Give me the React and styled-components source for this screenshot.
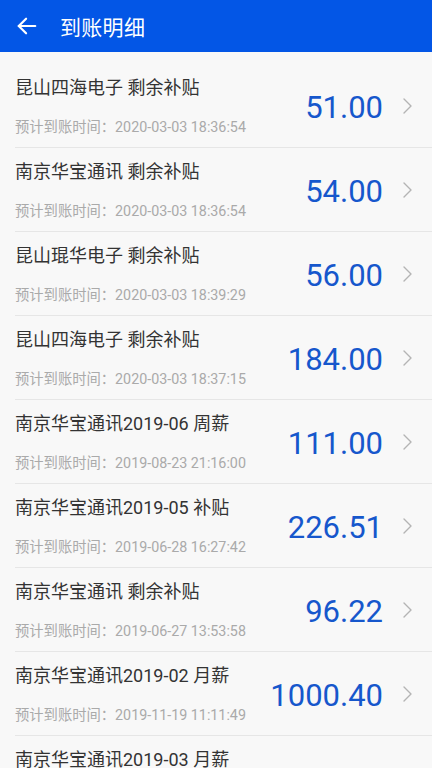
import React from "react";
import styled, { createGlobalStyle } from "styled-components";

const Global = createGlobalStyle`
  html, body { margin: 0; padding: 0; background: #f8f8f8; }
  body { font-family: Roboto, "Noto Sans CJK SC", sans-serif; }
  * { box-sizing: border-box; }
`;

const Page = styled.div`
  width: 432px;
  height: 768px;
  overflow: hidden;
  background: #f8f8f8;
`;

const Header = styled.div`
  height: 52px;
  background: #0356e6;
  display: flex;
  align-items: center;
  padding-left: 16px;
  color: #fff;
`;

const Back = styled.svg`
  width: 22px;
  height: 22px;
  margin-right: 22px;
`;

const Title = styled.div`
  font-family: "Noto Sans CJK SC", sans-serif;
  font-size: 21px;
  letter-spacing: 0.3px;
`;

const List = styled.div`
  margin-top: 12px;
  padding-left: 15px;
`;

const Row = styled.div`
  height: 84px;
  display: flex;
  align-items: center;
  border-bottom: 1px solid #e6e6e6;
  padding-right: 20px;
`;

const Info = styled.div`
  flex: 1;
  display: flex;
  flex-direction: column;
`;

const Name = styled.div`
  font-family: Roboto, "Noto Sans CJK SC", sans-serif;
  font-size: 18px;
  line-height: 24px;
  color: #333;
`;

const Time = styled.div`
  font-family: Roboto, "Noto Sans CJK SC", sans-serif;
  font-size: 14.3px;
  line-height: 18px;
  margin-top: 18px;
  color: #aaa;
`;

const Amount = styled.div`
  font-family: Roboto, sans-serif;
  font-size: 31px;
  color: #1657cc;
  margin-right: 20px;
  margin-top: 4px;
`;

const Chev = styled.svg`
  width: 9px;
  height: 16px;
`;

const items = [
  ["昆山四海电子 剩余补贴", "2020-03-03 18:36:54", "51.00"],
  ["南京华宝通讯 剩余补贴", "2020-03-03 18:36:54", "54.00"],
  ["昆山琨华电子 剩余补贴", "2020-03-03 18:39:29", "56.00"],
  ["昆山四海电子 剩余补贴", "2020-03-03 18:37:15", "184.00"],
  ["南京华宝通讯2019-06 周薪", "2019-08-23 21:16:00", "111.00"],
  ["南京华宝通讯2019-05 补贴", "2019-06-28 16:27:42", "226.51"],
  ["南京华宝通讯 剩余补贴", "2019-06-27 13:53:58", "96.22"],
  ["南京华宝通讯2019-02 月薪", "2019-11-19 11:11:49", "1000.40"],
  ["南京华宝通讯2019-03 月薪", "2019-11-19 11:11:49", "1000.40"],
];

export default function App() {
  return (
    <Page>
      <Global />
      <Header>
        <Back viewBox="0 0 24 24" fill="none" stroke="#fff" strokeWidth="2.4" strokeLinecap="round" strokeLinejoin="round">
          <path d="M21 12H3" />
          <path d="M11 4l-8 8 8 8" />
        </Back>
        <Title>到账明细</Title>
      </Header>
      <List>
        {items.map(([n, t, a], i) => (
          <Row key={i}>
            <Info>
              <Name>{n}</Name>
              <Time>预计到账时间：{t}</Time>
            </Info>
            <Amount>{a}</Amount>
            <Chev viewBox="0 0 9 16" fill="none" stroke="#b4b4b4" strokeWidth="1.4" strokeLinecap="round" strokeLinejoin="round">
              <path d="M1 1l7 7-7 7" />
            </Chev>
          </Row>
        ))}
      </List>
    </Page>
  );
}
